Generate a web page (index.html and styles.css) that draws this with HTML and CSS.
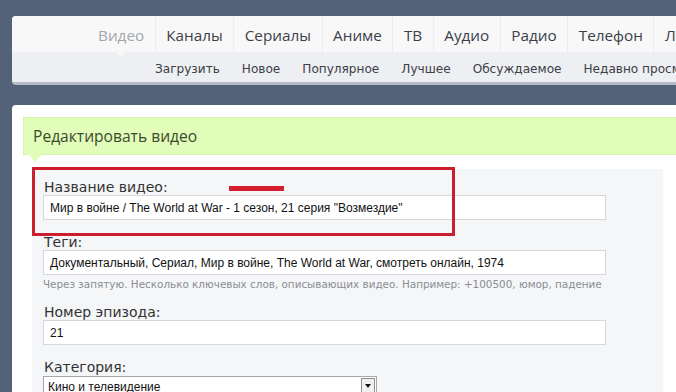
FILE: index.html
```html
<!DOCTYPE html>
<html lang="ru">
<head>
    <meta charset="UTF-8">
    <title>Редактировать видео</title>
    <link rel="stylesheet" href="styles.css">
</head>
<body>
    <div class="menu">
        <ul class="menu-top">
            <li class="current">Видео</li>
            <li>Каналы</li>
            <li>Сериалы</li>
            <li>Аниме</li>
            <li>ТВ</li>
            <li>Аудио</li>
            <li>Радио</li>
            <li>Телефон</li>
            <li>Люди</li>
        </ul>
        <ul class="menu-sub">
            <li>Загрузить</li>
            <li>Новое</li>
            <li>Популярное</li>
            <li>Лучшее</li>
            <li>Обсуждаемое</li>
            <li>Недавно просмотренное</li>
        </ul>
    </div>

    <div class="page">
        <div class="page-title">Редактировать видео</div>

        <form class="edit-form">
            <div class="field">
                <label>Название видео:</label>
                <div class="input">Мир в войне / The World at War - 1 сезон, 21 серия "Возмездие"</div>
            </div>
            <div class="field">
                <label>Теги:</label>
                <div class="input">Документальный, Сериал, Мир в войне, The World at War, смотреть онлайн, 1974</div>
                <p class="hint">Через запятую. Несколько ключевых слов, описывающих видео. Например: +100500, юмор, падение</p>
            </div>
            <div class="field">
                <label>Номер эпизода:</label>
                <div class="input">21</div>
            </div>
            <div class="field">
                <label>Категория:</label>
                <div class="select">Кино и телевидение<span class="select-btn"></span></div>
            </div>

            <!-- highlight drawn over the title field -->
            <div class="mark-box"></div>
            <div class="mark-bar"></div>
        </form>
    </div>
</body>
</html>
```

FILE: styles.css
```css
body {
    margin: 0;
    padding: 16px 0 0 12px;
    background: #536179;
    overflow: hidden;
    height: 392px;
    box-sizing: border-box;
    font-family: 'DejaVu Sans', Verdana, sans-serif;
    color: #333;
}
ul {
    list-style: none;
    margin: 0;
    padding: 0;
}
.menu {
    width: 720px;
    background: #eeeff2;
    border-radius: 4px 0 0 4px;
    border-bottom: 3px solid #b7bbc5;
}
.menu-top {
    display: flex;
    height: 36px;
    padding-left: 75px;
    background: #f8f8f9;
    border-radius: 4px 0 0 0;
    font-family: 'Open Sans', sans-serif;
    font-size: 15.3px;
    color: #3b4048;
}
.menu-top li {
    padding: 0 10.5px;
    line-height: 38px;
    border-right: 1px solid #ececef;
    white-space: nowrap;
}
.menu-top .current {
    position: relative;
    padding-left: 11px;
    color: #a3a7ad;
}
.menu-top .current:after {
    content: '';
    position: absolute;
    left: 50%;
    bottom: -5px;
    margin-left: -6px;
    border: 6px solid transparent;
    border-top-color: #f8f8f9;
    border-bottom: 0;
}
.menu-sub {
    display: flex;
    gap: 22px;
    height: 30px;
    padding-left: 143px;
    font-size: 12.1px;
    line-height: 34px;
    color: #3b4048;
    white-space: nowrap;
}
.page {
    width: 720px;
    height: 300px;
    margin-top: 20px;
    padding: 12px 0 0 11px;
    background: #fff;
    border-radius: 4px 0 0 0;
}
.page-title {
    position: relative;
    height: 36px;
    padding-left: 9px;
    background: #e2fcba;
    border: 1px solid #d9f4ae;
    border-right: 0;
    font-family: 'Open Sans', sans-serif;
    font-size: 15.6px;
    line-height: 36px;
    color: #3c4a2e;
}
.page-title:after {
    content: '';
    position: absolute;
    left: 4px;
    bottom: -8px;
    border: 7px solid transparent;
    border-top-color: #e2fcba;
    border-bottom: 0;
    border-top-width: 8px;
}
.edit-form {
    position: relative;
    width: 620px;
    height: 240px;
    margin: 14px 0 0 9px;
    padding: 10px 0 0 11px;
    background: #f5f6f8;
}
.field {
    margin-bottom: 14px;
}
.field label {
    display: block;
    padding-left: 1px;
    font-size: 14px;
    line-height: 16px;
    color: #333;
}
.input {
    width: 549px;
    height: 23px;
    padding: 0 6px;
    background: #fff;
    border: 1px solid #d6d7da;
    font-family: 'Liberation Sans', Arial, sans-serif;
    font-size: 12px;
    line-height: 24px;
    color: #111;
    white-space: nowrap;
}
.hint {
    margin: 1px 0 -2px;
    font-size: 10.4px;
    line-height: 16px;
    color: #8a8d92;
    white-space: nowrap;
}
.select {
    position: relative;
    width: 328px;
    height: 18px;
    margin-top: 1px;
    padding-left: 4px;
    background: #fff;
    border: 1px solid #a5a7ab;
    font-family: 'Liberation Sans', Arial, sans-serif;
    font-size: 12px;
    line-height: 20px;
    color: #111;
}
.select-btn {
    position: absolute;
    right: 1px;
    top: 1px;
    width: 12px;
    height: 14px;
    border: 1px solid #8c8e92;
    background: #f0f0f0;
}
.select-btn:after {
    content: '';
    position: absolute;
    left: 3px;
    top: 5px;
    border: 3px solid transparent;
    border-top: 4px solid #111;
    border-bottom: 0;
}
.mark-box {
    position: absolute;
    left: 0;
    top: -2px;
    width: 417px;
    height: 63px;
    border: 3px solid #cc1f2e;
}
.mark-bar {
    position: absolute;
    left: 197px;
    top: 17px;
    width: 55px;
    height: 5px;
    background: #d41f30;
}
```
